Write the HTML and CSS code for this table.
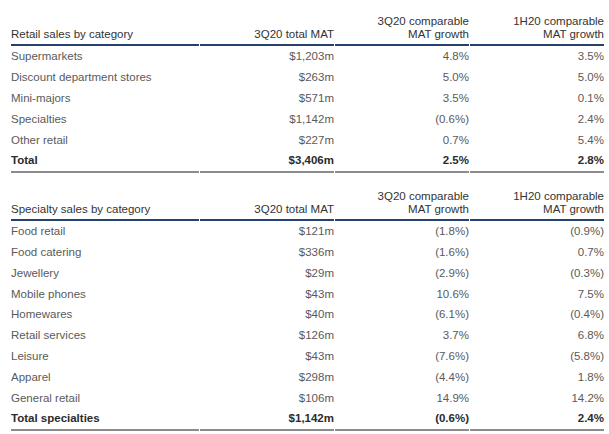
FILE: index.html
```html
<!DOCTYPE html>
<html>
<head>
<meta charset="utf-8">
<link rel="stylesheet" href="styles.css">
</head>
<body>
<div class="page">
  <table class="data">
    <thead>
      <tr>
        <th class="label">Retail sales by category</th>
        <th class="num">3Q20 total MAT</th>
        <th class="num">3Q20 comparable<br>MAT growth</th>
        <th class="num">1H20 comparable<br>MAT growth</th>
      </tr>
    </thead>
    <tbody>
      <tr><td class="label">Supermarkets</td><td class="num">$1,203m</td><td class="num">4.8%</td><td class="num">3.5%</td></tr>
      <tr><td class="label">Discount department stores</td><td class="num">$263m</td><td class="num">5.0%</td><td class="num">5.0%</td></tr>
      <tr><td class="label">Mini-majors</td><td class="num">$571m</td><td class="num">3.5%</td><td class="num">0.1%</td></tr>
      <tr><td class="label">Specialties</td><td class="num">$1,142m</td><td class="num">(0.6%)</td><td class="num">2.4%</td></tr>
      <tr><td class="label">Other retail</td><td class="num">$227m</td><td class="num">0.7%</td><td class="num">5.4%</td></tr>
      <tr class="total"><td class="label">Total</td><td class="num">$3,406m</td><td class="num">2.5%</td><td class="num">2.8%</td></tr>
    </tbody>
  </table>

  <table class="data second">
    <thead>
      <tr>
        <th class="label">Specialty sales by category</th>
        <th class="num">3Q20 total MAT</th>
        <th class="num">3Q20 comparable<br>MAT growth</th>
        <th class="num">1H20 comparable<br>MAT growth</th>
      </tr>
    </thead>
    <tbody>
      <tr><td class="label">Food retail</td><td class="num">$121m</td><td class="num">(1.8%)</td><td class="num">(0.9%)</td></tr>
      <tr><td class="label">Food catering</td><td class="num">$336m</td><td class="num">(1.6%)</td><td class="num">0.7%</td></tr>
      <tr><td class="label">Jewellery</td><td class="num">$29m</td><td class="num">(2.9%)</td><td class="num">(0.3%)</td></tr>
      <tr><td class="label">Mobile phones</td><td class="num">$43m</td><td class="num">10.6%</td><td class="num">7.5%</td></tr>
      <tr><td class="label">Homewares</td><td class="num">$40m</td><td class="num">(6.1%)</td><td class="num">(0.4%)</td></tr>
      <tr><td class="label">Retail services</td><td class="num">$126m</td><td class="num">3.7%</td><td class="num">6.8%</td></tr>
      <tr><td class="label">Leisure</td><td class="num">$43m</td><td class="num">(7.6%)</td><td class="num">(5.8%)</td></tr>
      <tr><td class="label">Apparel</td><td class="num">$298m</td><td class="num">(4.4%)</td><td class="num">1.8%</td></tr>
      <tr><td class="label">General retail</td><td class="num">$106m</td><td class="num">14.9%</td><td class="num">14.2%</td></tr>
      <tr class="total"><td class="label">Total specialties</td><td class="num">$1,142m</td><td class="num">(0.6%)</td><td class="num">2.4%</td></tr>
    </tbody>
  </table>
</div>
</body>
</html>
```

FILE: styles.css
```css
html, body {
  margin: 0;
  padding: 0;
  background: #ffffff;
}

.page {
  padding: 15px 0 0 11px;
  font-family: "Liberation Sans", Arial, sans-serif;
  font-size: 11.5px;
  color: #5a5a5a;
}

.data {
  width: 592px;
  border-collapse: separate;
  border-spacing: 1px 0;
  margin-left: -1px;
  table-layout: fixed;
}

.data.second {
  margin-top: 17px;
}

.data th {
  font-weight: normal;
  color: #333333;
  line-height: 13px;
  padding: 0 0 3px 0;
  vertical-align: bottom;
  border-bottom: 2px solid #24406f;
}

.data td {
  height: 20.8px;
  padding: 0;
  line-height: 14px;
  vertical-align: middle;
}

.data .label {
  text-align: left;
  width: 188px;
}

.data .num {
  text-align: right;
  width: 134px;
}

.data tr.total td {
  font-weight: bold;
  color: #2b2b2b;
  border-bottom: 2px solid #8c8c8c;
}
```
